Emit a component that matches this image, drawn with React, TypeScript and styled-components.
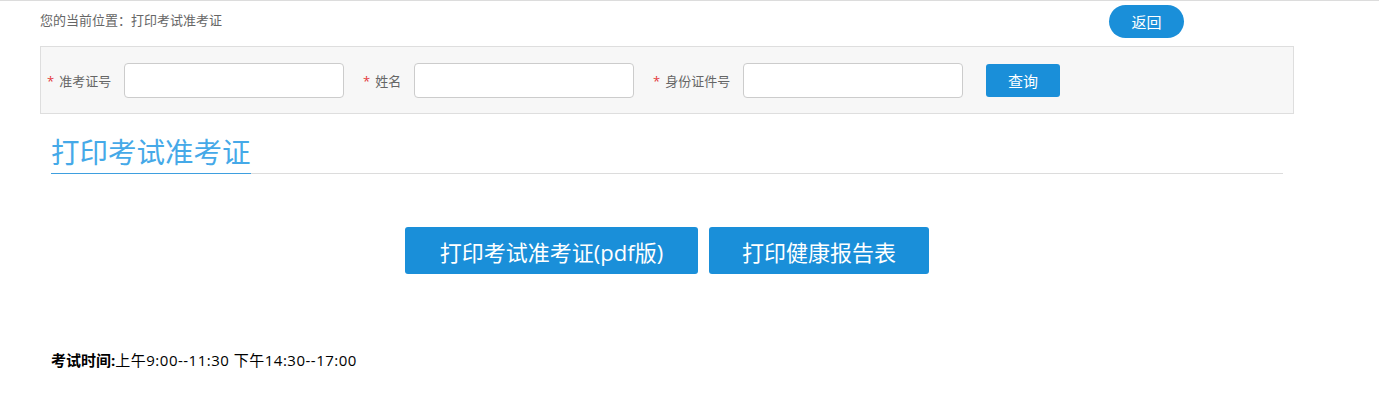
import styled, { createGlobalStyle } from "styled-components";

const GlobalStyle = createGlobalStyle`
  body {
    margin: 0;
    font-family: "Open Sans", "Noto Sans CJK SC", sans-serif;
    background: #fff;
  }
`;

const fields = [
  { label: "准考证号", labelWidth: 64 },
  { label: "姓名", labelWidth: 38 },
  { label: "身份证件号", labelWidth: 77 },
];

const App = () => {
  return (
    <>
      <GlobalStyle />
      <TopLine />
      <Container>
        <CrumbBar>
          <Crumb>您的当前位置：打印考试准考证</Crumb>
          <BackButton>返回</BackButton>
        </CrumbBar>

        <SearchPanel>
          {fields.map((f) => (
            <Field key={f.label}>
              <Label $width={f.labelWidth}>
                <Star>*</Star>
                {f.label}
              </Label>
              <Input type="text" />
            </Field>
          ))}
          <QueryButton>查询</QueryButton>
        </SearchPanel>

        <TitleBar>
          <Title>打印考试准考证</Title>
        </TitleBar>

        <Actions>
          <PrintButton $width={293}>打印考试准考证(pdf版)</PrintButton>
          <PrintButton $width={220}>打印健康报告表</PrintButton>
        </Actions>

        <ExamTime>
          <b>考试时间:</b>
          <TimeText>上午9:00--11:30 下午14:30--17:00</TimeText>
        </ExamTime>
      </Container>
    </>
  );
};

export default App;

const TopLine = styled.div`
  height: 1px;
  background: #dcdcdc;
`;

const Container = styled.div`
  width: 1254px;
  margin-left: 40px;
`;

const CrumbBar = styled.div`
  display: flex;
  justify-content: space-between;
  align-items: flex-start;
  height: 45px;
  padding-right: 110px;
`;

const Crumb = styled.div`
  font-size: 13px;
  color: #666;
  line-height: 18px;
  margin-top: 10px;
`;

const BackButton = styled.button`
  margin-top: 4px;
  width: 75px;
  height: 33px;
  border: none;
  border-radius: 17px;
  background: #1a8fd9;
  color: #fff;
  font-family: inherit;
  font-size: 15px;
  cursor: pointer;
`;

const SearchPanel = styled.div`
  display: flex;
  align-items: center;
  height: 66px;
  padding-left: 6px;
  background: #f7f7f7;
  border: 1px solid #dedede;
`;

const Field = styled.div`
  display: flex;
  align-items: center;
  margin-right: 19px;
`;

const Label = styled.label<{ $width: number }>`
  width: ${(p) => p.$width}px;
  margin-right: 13px;
  font-size: 13px;
  color: #666;
  white-space: nowrap;
`;

const Star = styled.span`
  color: #e4393c;
  margin-right: 5px;
`;

const Input = styled.input`
  box-sizing: border-box;
  width: 220px;
  height: 35px;
  border: 1px solid #ccc;
  border-radius: 4px;
  background: #fff;
  outline: none;
`;

const QueryButton = styled.button`
  margin-left: 4px;
  width: 74px;
  height: 33px;
  border: none;
  border-radius: 3px;
  background: #1a8fd9;
  color: #fff;
  font-family: inherit;
  font-size: 15px;
  cursor: pointer;
`;

const TitleBar = styled.div`
  margin: 0 11px;
  padding-top: 17px;
  border-bottom: 1px solid #dcdcdc;
  display: flex;
`;

const Title = styled.h2`
  margin: 0 0 -1px;
  font-size: 28.5px;
  font-weight: normal;
  line-height: 42px;
  color: #45a9e8;
  border-bottom: 1px solid #3e9fdf;
`;

const Actions = styled.div`
  display: flex;
  justify-content: center;
  gap: 11px;
  margin-top: 53px;
`;

const PrintButton = styled.button<{ $width: number }>`
  width: ${(p) => p.$width}px;
  height: 47px;
  padding: 0;
  border: none;
  border-radius: 3px;
  background: #1a8fd9;
  color: #fff;
  font-family: inherit;
  font-size: 22px;
  cursor: pointer;
`;

const ExamTime = styled.div`
  margin: 75px 0 0 11px;
  font-size: 15px;
  color: #000;
  line-height: 22px;
`;

const TimeText = styled.span`
  letter-spacing: 0.5px;
`;
